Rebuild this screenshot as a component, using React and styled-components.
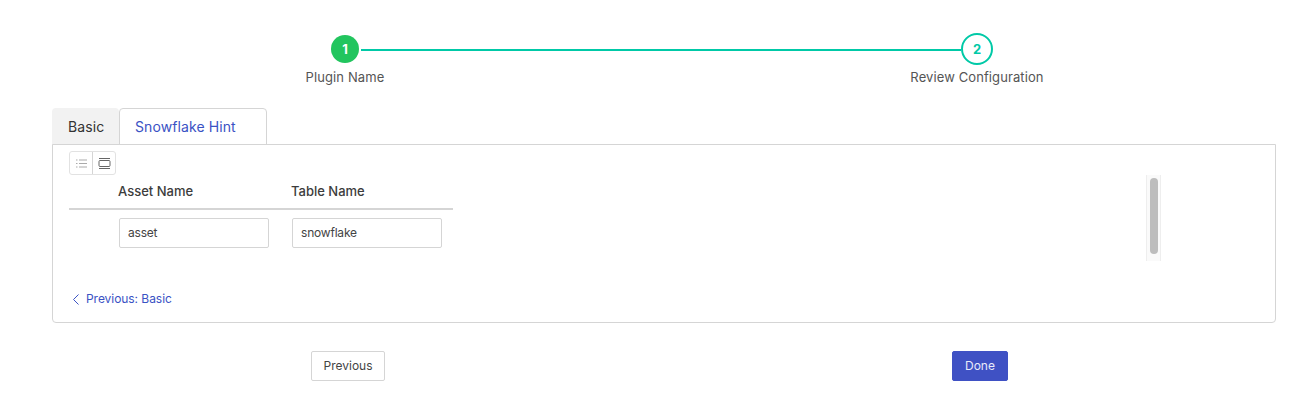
import React from 'react';
import styled, { createGlobalStyle } from 'styled-components';

const GlobalStyle = createGlobalStyle`
  html, body {
    margin: 0;
    padding: 0;
    background: #fff;
  }
  body {
    font-family: Inter, "Liberation Sans", sans-serif;
    color: #333;
  }
`;

const Page = styled.div`
  width: 1301px;
  height: 407px;
  box-sizing: border-box;
  padding: 33px 25px 0 52px;
  overflow: hidden;
`;

const Stepper = styled.div`
  display: flex;
  flex-direction: column;
  padding: 0 219px 0 213px;
`;

const StepTrack = styled.div`
  display: flex;
  align-items: center;
  height: 32px;
  padding: 0 64px 0 66px;
`;

const StepCircle = styled.div`
  flex: none;
  display: flex;
  align-items: center;
  justify-content: center;
  box-sizing: border-box;
  width: ${(p) => (p.$done ? '28px' : '32px')};
  height: ${(p) => (p.$done ? '28px' : '32px')};
  border-radius: 50%;
  font-size: 13px;
  font-weight: 700;
  background: ${(p) => (p.$done ? '#22c55e' : '#fff')};
  color: ${(p) => (p.$done ? '#fff' : '#00c9a7')};
  border: ${(p) => (p.$done ? 'none' : '2px solid #00c9a7')};
`;

const StepLine = styled.div`
  flex: 1;
  height: 2px;
  margin: 2px 0 0 2px;
  background: #00c9a7;
`;

const StepLabels = styled.div`
  display: flex;
  justify-content: space-between;
  margin-top: 4px;
`;

const StepLabel = styled.div`
  width: 160px;
  text-align: center;
  font-size: 13px;
  letter-spacing: 0.1px;
  line-height: 16px;
  color: #555;
`;

const TabBar = styled.div`
  display: flex;
  margin-top: 23px;
  height: 36px;
`;

const Tab = styled.div`
  box-sizing: border-box;
  display: flex;
  align-items: center;
  height: 37px;
  font-size: 14px;
  letter-spacing: 0.1px;
  padding: ${(p) => (p.$active ? '0 15px' : '0 16px')};
  border-radius: 4px 4px 0 0;
  color: ${(p) => (p.$active ? '#3a52c4' : '#333')};
  background: ${(p) => (p.$active ? '#fff' : '#f2f2f2')};
  border: ${(p) => (p.$active ? '1px solid #d5d5d5' : 'none')};
  width: ${(p) => (p.$active ? '148px' : '67px')};
`;

const Panel = styled.div`
  box-sizing: border-box;
  height: 179px;
  border: 1px solid #d5d5d5;
  border-radius: 0 0 4px 4px;
  padding: 6px 114px 0 16px;
  position: relative;
`;

const ViewToggle = styled.div`
  display: flex;
  width: 47px;
  height: 24px;
  box-sizing: border-box;
  border: 1px solid #e2e2e2;
  border-radius: 3px;
`;

const ToggleButton = styled.div`
  flex: 1;
  display: flex;
  align-items: center;
  justify-content: center;
  color: ${(p) => (p.$active ? '#666' : '#aaa')};
  border-left: ${(p) => (p.$active ? '1px solid #d5d5d5' : 'none')};
`;

const ContentRow = styled.div`
  display: flex;
  justify-content: space-between;
  height: 86px;
`;

const Table = styled.div`
  width: 384px;
`;

const HeaderRow = styled.div`
  display: flex;
  align-items: center;
  box-sizing: border-box;
  height: 35px;
  padding: 0 0 2px 49px;
  border-bottom: 2px solid #d5d5d5;
`;

const HeaderCell = styled.div`
  flex: none;
  width: 173px;
  font-size: 13px;
  font-weight: 500;
  color: #3c3c3c;
`;

const InputRow = styled.div`
  display: flex;
  gap: 23px;
  padding: 8px 0 0 50px;
`;

const TextField = styled.input`
  box-sizing: border-box;
  width: 150px;
  height: 30px;
  padding: 0 8px 2px;
  font: 12px Inter, "Liberation Sans", sans-serif;
  letter-spacing: -0.2px;
  color: #444;
  border: 1px solid #d5d5d5;
  border-radius: 2px;
  outline: none;
`;

const ScrollTrack = styled.div`
  box-sizing: border-box;
  width: 15px;
  height: 86px;
  padding: 3px 3px 7px 3px;
  background: #fafafa;
  border-left: 1px solid #eee;
  border-right: 1px solid #eee;
`;

const ScrollThumb = styled.div`
  width: 8px;
  height: 76px;
  border-radius: 4px;
  background: #bdbdbd;
`;

const BackLink = styled.a`
  display: flex;
  align-items: center;
  gap: 6px;
  margin: 29px 0 0 3px;
  font-size: 12px;
  letter-spacing: -0.05px;
  line-height: 18px;
  color: #3a52c4;
`;

const Actions = styled.div`
  display: flex;
  margin-top: 28px;
  padding-left: 259px;
`;

const Button = styled.button`
  box-sizing: border-box;
  height: 30px;
  padding: 0 0 1px;
  font: 12px Inter, "Liberation Sans", sans-serif;
  border-radius: 2px;
  width: ${(p) => (p.$primary ? '56px' : '74px')};
  margin-left: ${(p) => (p.$primary ? '567px' : '0')};
  color: ${(p) => (p.$primary ? '#e8ebfa' : '#444')};
  background: ${(p) => (p.$primary ? '#3f51c4' : '#fff')};
  border: 1px solid ${(p) => (p.$primary ? '#3f51c4' : '#d5d5d5')};
`;

const ListIcon = () => (
  <svg width="13" height="13" viewBox="0 0 13 13" fill="none" stroke="currentColor" strokeWidth="1">
    <path d="M1 3h1.5M1 6.5h1.5M1 10h1.5M4 3h8M4 6.5h8M4 10h8" />
  </svg>
);

const CardIcon = () => (
  <svg width="13" height="13" viewBox="0 0 13 13" fill="none" stroke="currentColor" strokeWidth="1">
    <path d="M1 1.5h11M1 11.5h11" />
    <rect x="1" y="3.5" width="11" height="6" rx="1" />
  </svg>
);

const ChevronLeft = () => (
  <svg width="8" height="11" viewBox="0 0 8 11" fill="none" stroke="currentColor" strokeWidth="1">
    <path d="M6.5 0.5L1.5 5.5l5 5" />
  </svg>
);

export default function App() {
  return (
    <Page>
      <GlobalStyle />
      <Stepper>
        <StepTrack>
          <StepCircle $done>1</StepCircle>
          <StepLine />
          <StepCircle>2</StepCircle>
        </StepTrack>
        <StepLabels>
          <StepLabel>Plugin Name</StepLabel>
          <StepLabel>Review Configuration</StepLabel>
        </StepLabels>
      </Stepper>
      <TabBar>
        <Tab>Basic</Tab>
        <Tab $active>Snowflake Hint</Tab>
      </TabBar>
      <Panel>
        <ViewToggle>
          <ToggleButton><ListIcon /></ToggleButton>
          <ToggleButton $active><CardIcon /></ToggleButton>
        </ViewToggle>
        <ContentRow>
          <Table>
            <HeaderRow>
              <HeaderCell>Asset Name</HeaderCell>
              <HeaderCell>Table Name</HeaderCell>
            </HeaderRow>
            <InputRow>
              <TextField defaultValue="asset" />
              <TextField defaultValue="snowflake" />
            </InputRow>
          </Table>
          <ScrollTrack><ScrollThumb /></ScrollTrack>
        </ContentRow>
        <BackLink><ChevronLeft />Previous: Basic</BackLink>
      </Panel>
      <Actions>
        <Button>Previous</Button>
        <Button $primary>Done</Button>
      </Actions>
    </Page>
  );
}
